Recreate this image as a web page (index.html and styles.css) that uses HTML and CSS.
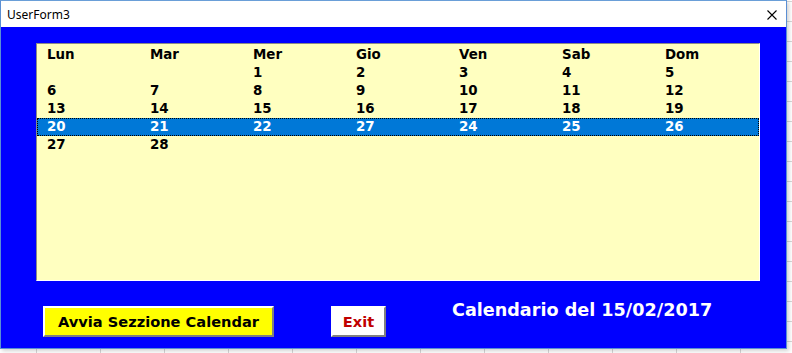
FILE: index.html
```html
<!DOCTYPE html>
<html lang="it">
<head>
    <meta charset="UTF-8">
    <title>UserForm3</title>
    <link rel="stylesheet" href="styles.css">
</head>
<body>
    <div class="window">
        <div class="titlebar">
            <span class="title">UserForm3</span>
            <svg class="close" width="10" height="10" viewBox="0 0 10 10">
                <path d="M0.5 0.5 L9.5 9.5 M9.5 0.5 L0.5 9.5" stroke="#000" stroke-width="1.1" fill="none"/>
            </svg>
        </div>
        <div class="form">
            <div class="listbox">
                <div class="row"><span>Lun</span><span>Mar</span><span>Mer</span><span>Gio</span><span>Ven</span><span>Sab</span><span>Dom</span></div>
                <div class="row"><span></span><span></span><span>1</span><span>2</span><span>3</span><span>4</span><span>5</span></div>
                <div class="row"><span>6</span><span>7</span><span>8</span><span>9</span><span>10</span><span>11</span><span>12</span></div>
                <div class="row"><span>13</span><span>14</span><span>15</span><span>16</span><span>17</span><span>18</span><span>19</span></div>
                <div class="row selected"><span>20</span><span>21</span><span>22</span><span>27</span><span>24</span><span>25</span><span>26</span></div>
                <div class="row"><span>27</span><span>28</span><span></span><span></span><span></span><span></span><span></span></div>
            </div>
            <div class="actions">
                <button class="btn btn-start">Avvia Sezzione Calendar</button>
                <button class="btn btn-exit">Exit</button>
                <div class="caption">Calendario del 15/02/2017</div>
            </div>
        </div>
    </div>
</body>
</html>
```

FILE: styles.css
```css
html, body {
    margin: 0;
    height: 100%;
}
body {
    background-color: #fff;
    background-image:
        repeating-linear-gradient(to right, transparent 0, transparent 36px, #d6d6d6 36px, #d6d6d6 37px, transparent 37px, transparent 64px),
        repeating-linear-gradient(to bottom, transparent 0, transparent 1px, #d6d6d6 1px, #d6d6d6 2px, transparent 2px, transparent 20px);
    background-size: 64px 20px;
    overflow: hidden;
}
.window {
    width: 785px;
    border: 1px solid #5b8fd4;
    border-top-color: #6a9fd8;
    box-shadow: 2px 2px 4px rgba(0, 0, 0, 0.18);
    background: #fff;
}
.titlebar {
    height: 26px;
    display: flex;
    align-items: center;
    justify-content: space-between;
    background: #fff;
    padding: 0 9px 0 6px;
}
.title {
    font-family: "Noto Sans", "Liberation Sans", sans-serif;
    font-size: 12px;
    color: #000;
    margin-top: 1px;
}
.close {
    display: block;
    margin-top: 2px;
}
.form {
    background: #0000ff;
    height: 321px;
    padding: 16px 0 0 35px;
    box-sizing: border-box;
}
.listbox {
    width: 724px;
    height: 238px;
    box-sizing: border-box;
    background: #ffffc0;
    border: 1px solid;
    border-color: #8a8a8a #fff #fff #8a8a8a;
    padding-top: 2px;
    font-family: "DejaVu Sans", sans-serif;
    font-weight: bold;
    font-size: 13.4px;
    color: #000;
}
.row {
    display: grid;
    grid-template-columns: repeat(7, 103px);
    height: 18px;
    line-height: 18px;
    padding-left: 10px;
}
.row.selected {
    background: #0078d7;
    color: #fff;
    outline: 1px dotted #000;
    outline-offset: -1px;
}
.actions {
    display: flex;
    align-items: flex-start;
    margin-top: 25px;
    margin-left: 7px;
}
.btn {
    height: 31px;
    box-sizing: border-box;
    border: 2px solid;
    border-color: #fff #808080 #808080 #fff;
    font-family: "DejaVu Sans", sans-serif;
    font-weight: bold;
    font-size: 14.6px;
    padding: 0;
    cursor: pointer;
}
.btn-start {
    width: 231px;
    background: #ffff00;
    color: #000;
}
.btn-exit {
    width: 55px;
    margin-left: 57px;
    background: #fff;
    color: #c00000;
}
.caption {
    margin-left: 66px;
    margin-top: -6px;
    font-family: "DejaVu Sans", sans-serif;
    font-weight: bold;
    font-size: 17.6px;
    color: #fff;
}
```
